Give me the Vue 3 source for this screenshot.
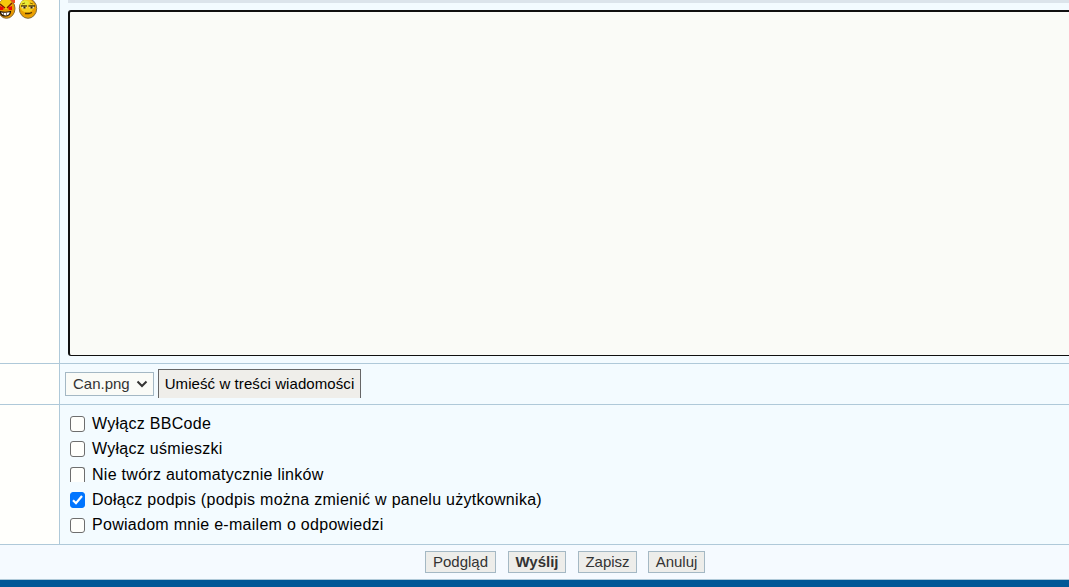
<template>
    <div class="posting">
        <div class="posting__row posting__row--message">
            <div class="posting__label">
                <svg class="smiley" width="18" height="20" viewBox="0 0 18 20">
                    <path d="M11 3l2-3h4v3z" fill="#f04a22" />
                    <ellipse cx="8.500" cy="8.500" rx="8.500" ry="9.800" fill="#e89a00" stroke="#8a6a38" />
                    <ellipse cx="8" cy="4" rx="6" ry="5" fill="#f6c80c" />
                    <path d="M13 0h4v3l-3-1z" fill="#f04a22" />
                    <path d="M2 4l5 4M14 3 9 8" stroke="#7a1c00" stroke-width="1.500" />
                    <path d="M2 6l4 1.500L5 10H2zM14 6l-4 1.500 1 2.500h3z" fill="#f00808" />
                    <path d="M2 11.500q5 1.500 10.500 0-.5 4.500-5 4.500T2 11.500z" fill="#fff" stroke="#241200" stroke-width="1.200" />
                    <path d="M5.500 12.500v3M8.500 12.500v3" stroke="#55402a" stroke-width=".7" />
                </svg>
                <svg class="smiley" width="20" height="20" viewBox="0 0 20 20">
                    <ellipse cx="10" cy="8.500" rx="8.700" ry="9.800" fill="#eba000" stroke="#806b3c" />
                    <ellipse cx="9" cy="6" rx="7" ry="6.500" fill="#f7d020" />
                    <ellipse cx="7" cy="3" rx="4" ry="2.500" fill="#e8ea38" />
                    <path d="M4 4l3-1M12 3l3 1" stroke="#8a6a00" />
                    <path d="M3 6h6M10.500 6H17" stroke="#4c3a10" stroke-width="1.400" />
                    <path d="M4 7.500h4.500M11.500 7.500h4.500" stroke="#e4dcb8" stroke-width="1.300" />
                    <path d="M5.500 6.500h2v2h-2zM12.500 6.500h2v2h-2z" fill="#332408" />
                    <path d="M7 13.500h4l3-1" fill="none" stroke="#513300" stroke-width="1.300" />
                </svg>
            </div>
            <div class="posting__field">
                <div class="toolbar-edge"></div>
                <textarea v-model="message" class="message" spellcheck="false"></textarea>
            </div>
        </div>

        <div class="posting__row posting__row--attachment">
            <div class="posting__label"></div>
            <div class="posting__field">
                <button type="button" class="file-select">
                    <span>{{ attachment }}</span>
                    <svg width="12" height="8" viewBox="0 0 12 8">
                        <path d="M1.500 1.500 6 6l4.500-4.500" fill="none" stroke="#333" stroke-width="2" />
                    </svg>
                </button>
                <button type="button" class="insert" @click="insertAttachment"><span>Umieść w treści wiadomości</span></button>
            </div>
        </div>

        <div class="posting__row posting__row--options">
            <div class="posting__label"></div>
            <div class="posting__field">
                <label v-for="option in options" :key="option.name" class="option" :class="`option--${option.name}`">
                    <input v-model="option.checked" type="checkbox" class="option__input">
                    <span class="option__box">
                        <svg v-if="option.checked" width="15" height="16" viewBox="0 0 15 16">
                            <path d="M3 8.200 6 11.200 12 4" fill="none" stroke="#fff" stroke-width="2.200" />
                        </svg>
                    </span>
                    <span class="option__text">{{ option.label }}</span>
                </label>
            </div>
        </div>

        <div class="posting__actions">
            <button v-for="action in actions" :key="action.name" type="button" class="action" :class="`action--${action.name}`">
                <span>{{ action.label }}</span>
            </button>
        </div>
        <div class="posting__footer"></div>
    </div>
</template>

<script setup>
import { ref } from 'vue';

const message = ref('');
const attachment = ref('Can.png');

const options = ref([
    { name: 'bbcode', label: 'Wyłącz BBCode', checked: false },
    { name: 'smilies', label: 'Wyłącz uśmieszki', checked: false },
    { name: 'links', label: 'Nie twórz automatycznie linków', checked: false },
    { name: 'signature', label: 'Dołącz podpis (podpis można zmienić w panelu użytkownika)', checked: true },
    { name: 'notify', label: 'Powiadom mnie e-mailem o odpowiedzi', checked: false }
]);

const actions = [
    { name: 'preview', label: 'Podgląd' },
    { name: 'submit', label: 'Wyślij' },
    { name: 'save', label: 'Zapisz' },
    { name: 'cancel', label: 'Anuluj' }
];

const insertAttachment = () => {
    message.value += `[attachment=0]${attachment.value}[/attachment]`;
};
</script>

<style>
body {
    margin: 0;
    overflow: hidden;
}
</style>

<style scoped>
.posting {
    width: 1069px;
    height: 587px;
    overflow: hidden;
    background: #f3fbff;
    color: #000;
    font-family: "Liberation Sans", Arial, sans-serif;
    font-size: 16px;
}

.posting * {
    box-sizing: border-box;
}

.posting__row {
    display: flex;
    border-bottom: 1px solid #afc9d9;
}

.posting__row--message {
    height: 364px;
}

.posting__row--attachment {
    height: 41px;
}

.posting__row--options {
    height: 140px;
}

.posting__label {
    display: flex;
    flex: 0 0 60px;
    border-right: 1px solid #afc9d9;
    background: #fffffc;
}

.smiley {
    flex: none;
    margin-left: -2px;
}

.smiley + .smiley {
    margin-left: 2px;
}

.posting__field {
    flex: 1;
    min-width: 0;
    background: #f3fbff;
}

.posting__row--message .posting__field {
    padding-left: 8px;
    overflow: hidden;
}

.toolbar-edge {
    height: 3px;
    margin-bottom: 7px;
    background: #dce4eb;
}

.message {
    display: block;
    width: 1020px;
    height: 346px;
    padding: 3px;
    border: 2px solid #101010;
    border-bottom-width: 1px;
    border-radius: 3px;
    outline: none;
    background: #fafbf7;
    resize: none;
}

.posting__row--attachment .posting__field {
    display: flex;
    align-items: flex-start;
    padding: 5px;
}

button {
    display: flex;
    align-items: center;
    justify-content: center;
    margin: 0;
    padding: 0;
    border: 1px solid #a4b8c4;
    border-radius: 0;
    background: #ededea;
    color: #333;
    font-family: inherit;
    font-size: 15px;
    line-height: 20px;
    white-space: nowrap;
}

.file-select {
    justify-content: space-between;
    width: 89px;
    height: 24px;
    margin-top: 3px;
    padding: 0 5px 0 7px;
    background: #fafbf7;
}

.insert {
    width: 203px;
    height: 29px;
    margin-left: 4px;
    border-color: #666;
    border-bottom: 0;
    background: #efeeea;
    color: #000;
    letter-spacing: 0.08px;
}

.posting__row--options .posting__field {
    padding: 6px 0 0 10px;
}

.option {
    display: flex;
    align-items: flex-start;
    height: 25px;
    white-space: nowrap;
}

.option--smilies {
    height: 26px;
}

.option__input {
    position: absolute;
    opacity: 0;
}

.option__box {
    width: 15px;
    height: 16px;
    margin: 5px 7px 0 0;
    border: 1px solid #6e6e6e;
    border-radius: 3px;
    background: #fffffc;
}

.option__box svg {
    display: block;
    margin: -1px;
}

.option__text {
    margin-top: 4px;
    line-height: 18px;
    letter-spacing: 0.28px;
}

.option--links .option__box {
    height: 15px;
    border-bottom: 0;
    border-radius: 3px 3px 0 0;
}

.option--signature .option__box {
    border-color: #0075ff;
    background: #0075ff;
}

.option--notify .option__box {
    height: 15px;
    margin-top: 6px;
}

.posting__actions {
    display: flex;
    height: 35px;
    padding: 6px 0 0 425px;
    border-bottom: 1px solid #afc9d9;
    background: #f5faff;
}

.action {
    height: 22px;
    margin-right: 12px;
}

.action--preview {
    width: 71px;
}

.action--submit {
    width: 58px;
    font-weight: bold;
}

.action--save {
    width: 59px;
    margin-right: 11px;
}

.action--cancel {
    width: 57px;
}

.posting__footer {
    height: 7px;
    background: #005796;
}
</style>
